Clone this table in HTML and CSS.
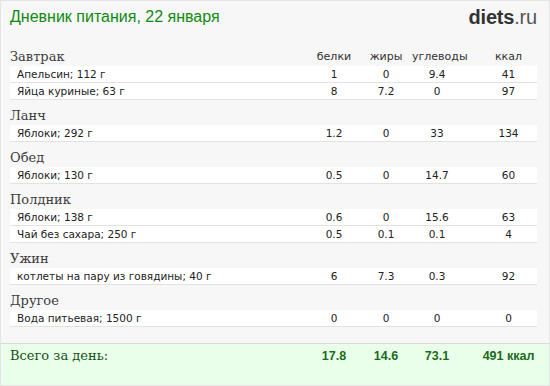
FILE: index.html
```html
<!DOCTYPE html>
<html lang="ru">
<head>
<meta charset="utf-8">
<title>Дневник питания</title>
<link rel="stylesheet" href="styles.css">
</head>
<body>
<div class="card">
  <header class="top">
    <h1 class="title">Дневник питания, 22 января</h1>
    <div class="logo"><b>diets</b>.ru</div>
  </header>

  <section class="meal">
    <div class="meal-head">
      <h2>Завтрак</h2>
      <span class="c">белки</span><span class="c">жиры</span><span class="c">углеводы</span><span class="c k">ккал</span>
    </div>
    <div class="row"><span class="name">Апельсин; 112 г</span><span class="c">1</span><span class="c">0</span><span class="c">9.4</span><span class="c k">41</span></div>
    <div class="row"><span class="name">Яйца куриные; 63 г</span><span class="c">8</span><span class="c">7.2</span><span class="c">0</span><span class="c k">97</span></div>
  </section>

  <section class="meal">
    <div class="meal-head"><h2>Ланч</h2></div>
    <div class="row"><span class="name">Яблоки; 292 г</span><span class="c">1.2</span><span class="c">0</span><span class="c">33</span><span class="c k">134</span></div>
  </section>

  <section class="meal">
    <div class="meal-head"><h2>Обед</h2></div>
    <div class="row"><span class="name">Яблоки; 130 г</span><span class="c">0.5</span><span class="c">0</span><span class="c">14.7</span><span class="c k">60</span></div>
  </section>

  <section class="meal">
    <div class="meal-head"><h2>Полдник</h2></div>
    <div class="row"><span class="name">Яблоки; 138 г</span><span class="c">0.6</span><span class="c">0</span><span class="c">15.6</span><span class="c k">63</span></div>
    <div class="row"><span class="name">Чай без сахара; 250 г</span><span class="c">0.5</span><span class="c">0.1</span><span class="c">0.1</span><span class="c k">4</span></div>
  </section>

  <section class="meal">
    <div class="meal-head"><h2>Ужин</h2></div>
    <div class="row"><span class="name">котлеты на пару из говядины; 40 г</span><span class="c">6</span><span class="c">7.3</span><span class="c">0.3</span><span class="c k">92</span></div>
  </section>

  <section class="meal">
    <div class="meal-head"><h2>Другое</h2></div>
    <div class="row"><span class="name">Вода питьевая; 1500 г</span><span class="c">0</span><span class="c">0</span><span class="c">0</span><span class="c k">0</span></div>
  </section>

  <footer class="total">
    <span class="total-label">Всего за день:</span>
    <span class="c">17.8</span><span class="c">14.6</span><span class="c">73.1</span><span class="c k">491 ккал</span>
  </footer>
</div>
</body>
</html>
```

FILE: styles.css
```css
* { box-sizing: border-box; }
html, body { margin: 0; padding: 0; }
body { width: 550px; height: 386px; overflow: hidden; }

.card {
  width: 550px;
  height: 386px;
  border: 1px solid #e4e4e4;
  background: #f7f7f7;
  display: flex;
  flex-direction: column;
}

.top {
  height: 40px;
  display: flex;
  justify-content: space-between;
  align-items: flex-start;
  padding: 5px 12px 0 9px;
}
.title {
  margin: 0;
  font: normal 16px/22px "Liberation Sans", Arial, sans-serif;
  color: #108a10;
}
.logo {
  font: 20px/22px "Liberation Sans", Arial, sans-serif;
  color: #555;
  letter-spacing: -0.2px;
}
.logo b { color: #333; font-weight: bold; }

.meal { padding: 0 12px 0 9px; }

.meal-head, .row, .total {
  display: grid;
  grid-template-columns: 1fr 52px 52px 50px 75px;
  align-items: center;
}
.c { text-align: center; }
.k { padding-left: 18px; }

.meal-head {
  height: 25px;
  padding-top: 7px;
}
.meal-head h2 {
  margin: 0;
  font: normal 13px/18px "DejaVu Serif", Georgia, serif;
  color: #3c3c3c;
}
.meal-head .c {
  font: 11px/18px "DejaVu Sans", Verdana, sans-serif;
  color: #333;
}

.row {
  height: 17px;
  background: #fff;
  border-bottom: 1px solid #e2e2e2;
  font: 10.5px/16px "DejaVu Sans", Verdana, sans-serif;
  color: #222;
}
.row .name { padding-left: 7px; }

.total {
  margin-top: auto;
  height: 42px;
  padding: 0 12px 18px 9px;
  background: #eaffea;
  border-top: 1px solid #d9d9d9;
  color: #1c6b1c;
}
.total-label {
  font: normal 13px/22px "DejaVu Serif", Georgia, serif;
  color: #145214;
}
.total .c {
  font: bold 12.5px/22px "Liberation Sans", Arial, sans-serif;
}
```
